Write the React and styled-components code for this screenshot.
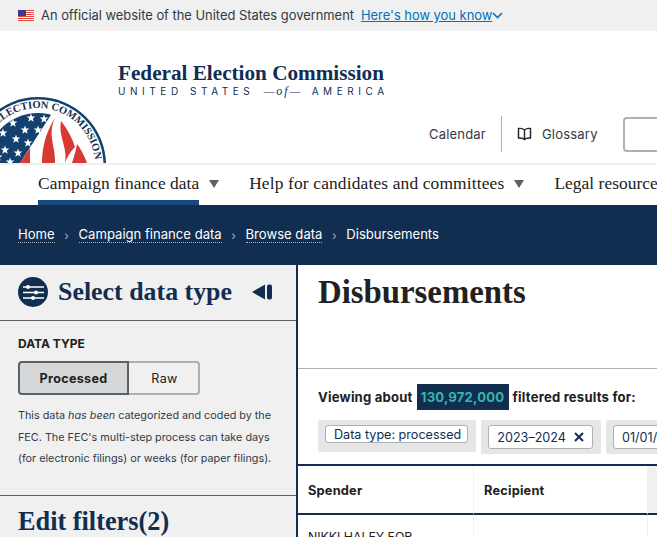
import React from 'react'
import styled, { createGlobalStyle } from 'styled-components'

const navy = '#112e51'
const sans = '"Inter", "Liberation Sans", sans-serif'
const serif = '"Liberation Serif", serif'

const Global = createGlobalStyle`
  html, body { margin: 0; padding: 0; background: #fff; }
  * { box-sizing: border-box; }
`
const Page = styled.div`
  width: 657px;
  height: 537px;
  overflow: hidden;
  font-family: ${sans};
  color: #212121;
`
const GovBanner = styled.div`
  height: 31px;
  background: #f0f0f0;
  display: flex;
  align-items: center;
  padding-left: 18px;
  font-size: 12.9px;
  color: #323a45;
`
const Flag = styled.svg`
  width: 16px;
  height: 11px;
  margin-right: 7px;
`
const GovLink = styled.a`
  color: #0071bc;
  text-decoration: underline;
  margin-left: 7px;
`
const Header = styled.header`
  height: 132px;
  display: flex;
  align-items: flex-end;
  white-space: nowrap;
`
const Seal = styled.svg`
  width: 107px;
  height: 66px;
  flex: none;
  display: block;
`
const Wordmark = styled.div`
  align-self: flex-start;
  margin: 31px 0 0 11px;
  width: 268px;
  color: ${navy};
`
const AgencyName = styled.div`
  font-family: ${serif};
  font-weight: 700;
  font-size: 21.2px;
  line-height: 22px;
  white-space: nowrap;
`
const Tagline = styled.div`
  font-size: 10px;
  letter-spacing: 4.55px;
  line-height: 14px;
  white-space: nowrap;
  em { font-family: ${serif}; font-size: 12px; letter-spacing: 2px; margin: 0 2px; }
`
const Utility = styled.div`
  margin-left: 43px;
  height: 36px;
  margin-bottom: 11px;
  display: flex;
  align-items: center;
  font-size: 13px;
  letter-spacing: 0.2px;
  color: #323a45;
`
const UtilityDivider = styled.span`
  width: 1px;
  height: 36px;
  background: #aeb0b5;
  margin: 0 15px;
`
const Glossary = styled.span`
  display: flex;
  align-items: center;
  gap: 10px;
`
const SearchBox = styled.div`
  width: 60px;
  height: 35px;
  margin-left: 25px;
  border: 2px solid #aeb0b5;
  border-radius: 4px;
  flex: none;
`
const Nav = styled.nav`
  height: 42px;
  border-top: 2px solid #f0f0f0;
  display: flex;
  padding-left: 38px;
  font-family: ${serif};
  font-size: 17.4px;
  color: #212121;
  white-space: nowrap;
`
const NavItem = styled.div`
  display: flex;
  height: 40px;
  margin-right: 30px;
`
const NavLabel = styled.span`
  line-height: 37px;
  letter-spacing: ${p => p.$track || 0.04}px;
  border-bottom: 5px solid ${p => (p.$active ? '#174a7c' : 'transparent')};
`
const Caret = styled.span`
  width: 0;
  height: 0;
  margin: 15px 0 0 10px;
  border-left: 5px solid transparent;
  border-right: 5px solid transparent;
  border-top: 8px solid #5b616b;
`
const Crumbs = styled.div`
  height: 60px;
  background: ${navy};
  display: flex;
  align-items: center;
  padding-left: 18px;
  font-size: 13.1px;
  color: #fff;
`
const Crumb = styled.a`
  color: #fff;
  border-bottom: 1px dotted ${p => (p.$current ? 'transparent' : '#aeb0b5')};
  line-height: 15px;
`
const Sep = styled.span`
  color: #aeb0b5;
  font-size: 12px;
  margin: 0 9.6px;
`
const Body = styled.div`
  display: flex;
  height: 272px;
`
const Sidebar = styled.aside`
  width: 298px;
  flex: none;
  background: #f0f0f0;
  border-right: 2px solid ${navy};
`
const SideHead = styled.div`
  height: 56px;
  display: flex;
  align-items: center;
  padding: 0 24px 2px 18px;
  border-bottom: 1px solid #5b616b;
`
const SideIcon = styled.svg`
  width: 30px;
  height: 30px;
  flex: none;
`
const SideTitle = styled.h2`
  margin: 0 0 0 10px;
  flex: 1;
  font-family: ${serif};
  font-size: 25.9px;
  font-weight: 700;
  color: ${navy};
`
const Collapse = styled.svg`
  width: 20px;
  height: 16px;
`
const DataType = styled.div`
  height: 175px;
  padding: 15px 18px 0;
  border-bottom: 1px solid #5b616b;
`
const Label = styled.div`
  font-size: 12px;
  font-weight: 700;
  line-height: 16px;
  color: #212121;
`
const Toggle = styled.div`
  display: flex;
  margin-top: 9px;
`
const ToggleBtn = styled.div`
  height: 34px;
  width: ${p => p.$w}px;
  display: flex;
  align-items: center;
  justify-content: center;
  font-size: 12.6px;
  letter-spacing: 0.3px;
  font-weight: ${p => (p.$on ? 700 : 400)};
  background: ${p => (p.$on ? '#d6d7d9' : 'transparent')};
  border: 2px solid ${p => (p.$on ? '#5b616b' : '#aeb0b5')};
  border-radius: ${p => (p.$on ? '4px 0 0 4px' : '0 4px 4px 0')};
  ${p => !p.$on && 'border-left: 0; padding-left: 2px;'}
`
const Help = styled.p`
  margin: 10px 0 0;
  font-size: 10.8px;
  line-height: 21.5px;
  color: #323a45;
  white-space: nowrap;
`
const FiltersTitle = styled.h2`
  margin: 11px 0 0 18px;
  font-family: ${serif};
  font-size: 26.3px;
  font-weight: 700;
  color: ${navy};
  line-height: 30px;
`
const Main = styled.main`
  width: 359px;
  flex: none;
  overflow: hidden;
`
const TitleBlock = styled.div`
  height: 104px;
  padding: 8px 0 0 20px;
  border-bottom: 1px solid #aeb0b5;
`
const Title = styled.h1`
  margin: 0;
  font-family: ${serif};
  font-size: 32.8px;
  line-height: 38px;
  font-weight: 700;
  color: #212121;
`
const Viewing = styled.div`
  display: flex;
  align-items: center;
  margin: 15px 0 0 20px;
  height: 26px;
  font-size: 13.1px;
  font-weight: 700;
  letter-spacing: 0.2px;
  white-space: nowrap;
`
const Count = styled.span`
  background: ${navy};
  color: #36b5ac;
  width: 92px;
  height: 26px;
  line-height: 26px;
  text-align: center;
  margin: 0 4px;
`
const TagRow = styled.div`
  display: flex;
  gap: 5px;
  margin: 10px 0 0 20px;
  width: 700px;
`
const TagWrap = styled.div`
  height: ${p => p.$h}px;
  background: #e6e6e6;
  border-radius: 2px;
  padding: 5px 8px 5px 7px;
  flex: none;
`
const Tag = styled.span`
  display: flex;
  align-items: center;
  height: ${p => p.$h}px;
  background: #fff;
  border: 1px solid #aeb0b5;
  border-radius: 3px;
  padding: 0 ${p => p.$right}px 0 8px;
  font-size: 12.6px;
  color: ${navy};
  white-space: nowrap;
`
const Close = styled.svg`
  width: 10px;
  height: 10px;
  margin-left: 8px;
`
const Table = styled.div`
  margin-top: 10px;
  border-top: 2px solid ${navy};
  display: grid;
  grid-template-columns: 176px 174px 60px;
  width: 410px;
`
const HeadCell = styled.div`
  height: 49px;
  border-bottom: 2px solid ${navy};
  border-right: 1px solid #f0f0f0;
  padding: 1px 0 0 10px;
  display: flex;
  align-items: center;
  font-size: 12.8px;
  font-weight: 700;
  letter-spacing: 0.2px;
  background: ${p => (p.$shade ? '#f0f0f0' : '#fff')};
`
const Cell = styled.div`
  padding: 14px 0 0 10px;
  border-right: 1px solid #f0f0f0;
  font-size: 12.3px;
  white-space: nowrap;
`

// five-point star, centred on the point it is drawn at
const starPoints = (cx, cy, r) => {
  const pts = []
  for (let i = 0; i < 10; i++) {
    const rad = i % 2 ? r * 0.42 : r
    const a = -Math.PI / 2 + (i * Math.PI) / 5
    pts.push(`${(cx + rad * Math.cos(a)).toFixed(1)},${(cy + rad * Math.sin(a)).toFixed(1)}`)
  }
  return pts.join(' ')
}
const stars = [[31, 21], [44, 22], [13, 26], [25, 33], [38, 33], [3, 36], [16, 42], [28, 46], [5, 53], [18, 56], [-2, 60], [10, 65]]

export default function App() {
  return (
    <Page>
      <Global />
      <GovBanner>
        <Flag viewBox="0 0 16 11">
          <rect width="16" height="11" fill="#fff" />
          {[0, 2, 4, 6, 8, 10].map(y => <rect key={y} y={y} width="16" height="1" fill="#e04a3f" />)}
          <rect width="8" height="6" fill="#3c3b8f" />
        </Flag>
        An official website of the United States government
        <GovLink>Here's how you know</GovLink>
        <svg width="11" height="7" viewBox="0 0 11 7"><path d="M1 1l4.5 4.5L10 1" fill="none" stroke="#0071bc" strokeWidth="1.6" /></svg>
      </GovBanner>
      <Header>
        <Seal viewBox="0 0 107 66">
          <defs>
            <path id="ring" d="M -19 68 A 57 57 0 0 1 95 68" />
            <clipPath id="inner"><circle cx="38" cy="68" r="52" /></clipPath>
          </defs>
          <circle cx="38" cy="68" r="68" fill="#12406f" />
          <circle cx="38" cy="68" r="65.5" fill="#fff" />
          <text fontFamily="Liberation Serif, serif" fontSize="10.5" fontWeight="700" fill={navy} textAnchor="end">
            <textPath href="#ring" startOffset="97%">ELECTION COMMISSION</textPath>
          </text>
          <g clipPath="url(#inner)">
            <rect x="-20" y="10" width="120" height="60" fill="#fff" />
            <path d="M-20 10 H56 L20 66 H-20 Z" fill="#12406f" />
            {stars.map(([x, y]) => <polygon key={`${x}-${y}`} points={starPoints(x, y, 4.6)} fill="#fff" />)}
            <path d="M55 21 C46 35 42 50 42 66 L55 66 C56 50 47 38 55 21 Z" fill="#d83933" />
            <path d="M20 66 L30 51 L30 66 Z" fill="#d83933" />
            <path d="M61 24 C66 30 72 40 75 50 C70 55 67 60 65 66 C68 50 58 40 61 24 Z" fill="#d83933" />
            <path d="M77 47 C81 52 85 60 87 66 L72 66 C74 60 76 53 77 47 Z" fill="#d83933" />
          </g>
        </Seal>
        <Wordmark>
          <AgencyName>Federal Election Commission</AgencyName>
          <Tagline>UNITED STATES <em>—<i>of</i>—</em> AMERICA</Tagline>
        </Wordmark>
        <Utility>
          Calendar
          <UtilityDivider />
          <Glossary>
            <svg width="15" height="14" viewBox="0 0 15 14" fill="none" stroke="#212121" strokeWidth="1.4">
              <path d="M7.5 3 C6 1.6 3.5 1.2 1.5 1.5 V11 C3.5 10.8 6 11 7.5 12.6 C9 11 11.5 10.8 13.5 11 V1.5 C11.5 1.2 9 1.6 7.5 3 Z M7.5 3 V12.6" />
            </svg>
            Glossary
          </Glossary>
          <SearchBox />
        </Utility>
      </Header>
      <Nav>
        <NavItem><NavLabel $active>Campaign finance data</NavLabel><Caret /></NavItem>
        <NavItem><NavLabel $track={0.15}>Help for candidates and committees</NavLabel><Caret /></NavItem>
        <NavItem><NavLabel>Legal resources</NavLabel></NavItem>
      </Nav>
      <Crumbs>
        <Crumb>Home</Crumb><Sep>›</Sep>
        <Crumb>Campaign finance data</Crumb><Sep>›</Sep>
        <Crumb>Browse data</Crumb><Sep>›</Sep>
        <Crumb $current>Disbursements</Crumb>
      </Crumbs>
      <Body>
        <Sidebar>
          <SideHead>
            <SideIcon viewBox="0 0 30 30">
              <circle cx="15" cy="15" r="15" fill={navy} />
              <path d="M5 10h21M5 15.5h21M5 21h21" stroke="#fff" strokeWidth="1.3" />
              <g fill="#fff">
                <circle cx="10" cy="10" r="2" /><circle cx="18" cy="15.5" r="2" /><circle cx="15" cy="21" r="2" />
              </g>
            </SideIcon>
            <SideTitle>Select data type</SideTitle>
            <Collapse viewBox="0 0 20 16">
              <path d="M0 8 L13 0.5 V15.5 Z" fill={navy} />
              <rect x="15" y="0.5" width="5" height="15" rx="2" fill={navy} />
            </Collapse>
          </SideHead>
          <DataType>
            <Label>DATA TYPE</Label>
            <Toggle>
              <ToggleBtn $on $w={111}>Processed</ToggleBtn>
              <ToggleBtn $w={71}>Raw</ToggleBtn>
            </Toggle>
            <Help>
              This data <i>has been</i> categorized and coded by the<br />
              FEC. The FEC's multi-step process can take days<br />
              (for electronic filings) or weeks (for paper filings).
            </Help>
          </DataType>
          <FiltersTitle>Edit filters(2)</FiltersTitle>
        </Sidebar>
        <Main>
          <TitleBlock><Title>Disbursements</Title></TitleBlock>
          <Viewing>
            Viewing about <Count>130,972,000</Count> filtered results for:
          </Viewing>
          <TagRow>
            <TagWrap $h={32}><Tag $h={18} $right={6}>Data type: processed</Tag></TagWrap>
            <TagWrap $h={34}>
              <Tag $h={24} $right={8}>
                2023–2024
                <Close viewBox="0 0 10 10"><path d="M1 1l8 8M9 1l-8 8" stroke={navy} strokeWidth="2" /></Close>
              </Tag>
            </TagWrap>
            <TagWrap $h={34}><Tag $h={24} $right={8}>01/01/2023</Tag></TagWrap>
          </TagRow>
          <Table>
            <HeadCell>Spender</HeadCell>
            <HeadCell>Recipient</HeadCell>
            <HeadCell $shade />
            <Cell>NIKKI HALEY FOR</Cell>
            <Cell />
            <Cell />
          </Table>
        </Main>
      </Body>
    </Page>
  )
}
